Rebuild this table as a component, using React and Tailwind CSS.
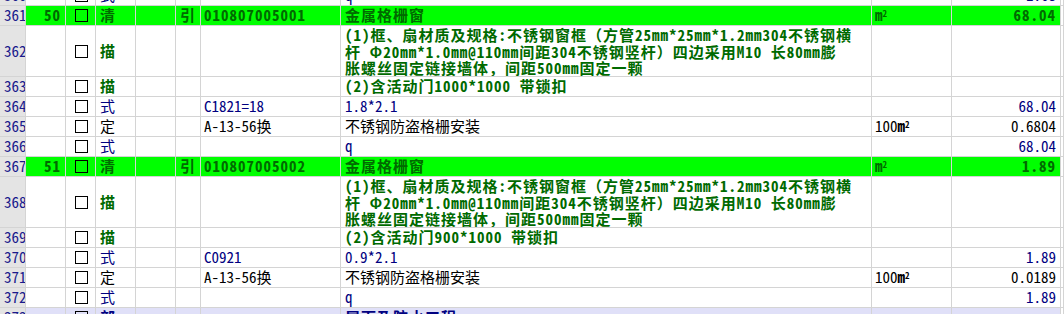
import React from "react";

const cols =
	"grid grid-cols-[26px_40px_30px_40px_40px_25px_140px_531px_80px_109px_3px]";
const cell = "border-r border-b border-[#d4d4d4] flex items-center overflow-hidden whitespace-nowrap";

const Unit = ({ pre }) => (
	<span>
		{pre}
		<span className="font-bold">m</span>
		<sup className="text-[9px] font-bold">2</sup>
	</span>
);

const rows = [
	{ no: "360", type: "式", kind: "calc", name: "q", qty: "1.68", partialTop: true },
	{ no: "361", seq: "50", type: "清", kind: "item", ref: "引", code: "010807005001", name: "金属格栅窗", unit: true, qty: "68.04" },
	{
		no: "362",
		type: "描",
		kind: "desc",
		tall: true,
		lines: [
			"(1)框、扇材质及规格:不锈钢窗框（方管25mm*25mm*1.2mm304不锈钢横",
			"杆 Φ20mm*1.0mm@110mm间距304不锈钢竖杆）四边采用M10 长80mm膨",
			"胀螺丝固定链接墙体，间距500mm固定一颗",
		],
	},
	{ no: "363", type: "描", kind: "desc", lines: ["(2)含活动门1000*1000 带锁扣"] },
	{ no: "364", type: "式", kind: "calc", code: "C1821=18", name: "1.8*2.1", qty: "68.04" },
	{ no: "365", type: "定", kind: "quota", code: "A-13-56换", name: "不锈钢防盗格栅安装", unit: "100", qty: "0.6804" },
	{ no: "366", type: "式", kind: "calc", name: "q", qty: "68.04" },
	{ no: "367", seq: "51", type: "清", kind: "item", ref: "引", code: "010807005002", name: "金属格栅窗", unit: true, qty: "1.89" },
	{
		no: "368",
		type: "描",
		kind: "desc",
		tall: true,
		lines: [
			"(1)框、扇材质及规格:不锈钢窗框（方管25mm*25mm*1.2mm304不锈钢横",
			"杆 Φ20mm*1.0mm@110mm间距304不锈钢竖杆）四边采用M10 长80mm膨",
			"胀螺丝固定链接墙体，间距500mm固定一颗",
		],
	},
	{ no: "369", type: "描", kind: "desc", lines: ["(2)含活动门900*1000 带锁扣"] },
	{ no: "370", type: "式", kind: "calc", code: "C0921", name: "0.9*2.1", qty: "1.89" },
	{ no: "371", type: "定", kind: "quota", code: "A-13-56换", name: "不锈钢防盗格栅安装", unit: "100", qty: "0.0189" },
	{ no: "372", type: "式", kind: "calc", name: "q", qty: "1.89" },
	{ no: "373", type: "部", kind: "part", name: "屋面及防水工程" },
];

const Row = ({ r }) => {
	// colours per row kind
	const bg =
		r.kind === "item" ? "bg-[#00ff00]" : r.kind === "part" ? "bg-[#e0e0f8]" : "bg-white";
	const text =
		r.kind === "item" || r.kind === "desc"
			? "text-[#006a00] font-bold tracking-[1px]"
			: r.kind === "quota"
			? "text-black"
			: r.kind === "part"
			? "text-[#000080] font-bold tracking-[1px]"
			: "text-[#000080]";
	const typeText =
		r.kind === "quota" ? "text-black" : r.kind === "calc" ? "text-[#000080]" : "";

	return (
		<div
			className={`${cols} ${r.tall ? "h-[51px]" : "h-[20px]"} ${
				r.partialTop ? "-mt-[14px]" : ""
			}`}
		>
			<div className={`${cell} bg-[#e4e4e4] text-[#1a1a8c] pl-[4px]`}>{r.no}</div>
			<div className={`${cell} ${bg} ${text} justify-end pr-[4px]`}>{r.seq}</div>
			<div className={`${cell} ${bg} justify-center`}>
				<div className="w-[13px] h-[13px] border border-black ml-[1px]" />
			</div>
			<div className={`${cell} ${bg} ${text} ${typeText} pl-[4px]`}>{r.type}</div>
			<div className={`${cell} ${bg}`} />
			<div className={`${cell} ${bg} ${text} justify-center`}>{r.ref}</div>
			<div
				className={`${cell} ${bg} pl-[3px] ${
					r.kind === "item" ? text : r.kind === "quota" ? "text-black" : "text-[#000080]"
				}`}
			>
				{r.code}
			</div>
			<div
				className={`${cell} ${bg} ${text} pl-[4px] ${
					r.tall ? "flex-col items-start justify-start pt-[1px]" : ""
				}`}
			>
				{r.lines ? r.lines.map((l, i) => <div key={i}>{l}</div>) : r.name}
			</div>
			<div
				className={`${cell} ${bg} pl-[3px] ${
					r.kind === "item" ? "text-[#006a00]" : "text-black"
				}`}
			>
				{r.unit === true ? <Unit /> : r.unit ? <Unit pre={r.unit} /> : null}
			</div>
			<div
				className={`${cell} ${bg} justify-end pr-[4px] ${
					r.kind === "item" ? text : r.kind === "quota" ? "text-black" : "text-[#000080]"
				}`}
			>
				{r.qty}
			</div>
			<div className={`${cell} bg-white`} />
		</div>
	);
};

export default function App() {
	return (
		<div className="w-[1064px] h-[314px] overflow-hidden bg-white font-['Noto_Sans_Mono_CJK_SC','Noto_Sans_CJK_SC',sans-serif] text-[15px] leading-[16.5px]">
			{rows.map((r) => (
				<Row key={r.no} r={r} />
			))}
		</div>
	);
}
